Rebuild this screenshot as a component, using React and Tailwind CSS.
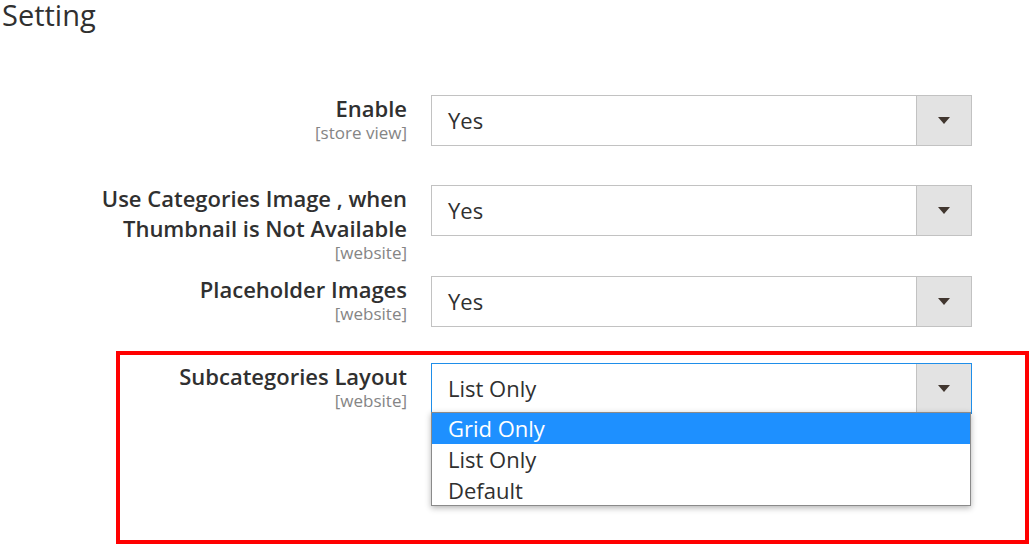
const font = { fontFamily: '"Open Sans", "Liberation Sans", sans-serif' };

function Arrow() {
  return (
    <svg width="12" height="7" viewBox="0 0 12 7">
      <path d="M0 0 H12 L6 7 Z" fill="#41362f" />
    </svg>
  );
}

function Select({ value, focused }) {
  return (
    <div
      className={
        "flex h-[51px] w-[541px] bg-white border " +
        (focused ? "border-[#1f8ee9]" : "border-[#c2c2c2]")
      }
    >
      <div className="flex flex-1 items-center pl-[16px] text-[22px] text-[#303030]">{value}</div>
      <div className="flex w-[55px] items-center justify-center bg-[#e3e3e3] border-l border-[#c2c2c2]">
        <Arrow />
      </div>
    </div>
  );
}

function Label({ lines, scope, width = "w-[407px]" }) {
  return (
    <div className={width + " -mt-[2px] text-right"}>
      {lines.map((l) => (
        <div key={l} className="text-[22px] leading-[30px] font-semibold text-[#303030]">
          {l}
        </div>
      ))}
      <div className="text-[17px] leading-[20px] text-[#858585]">{scope}</div>
    </div>
  );
}

export default function App() {
  return (
    <div className="w-[1032px] h-[546px] overflow-hidden bg-white" style={font}>
      <div className="h-[95px] pl-[2px] pt-[1px]">
        <h2 className="text-[29px] leading-[28px] font-medium text-[#303030]">Setting</h2>
      </div>

      <div className="flex h-[90px] items-start gap-[24px]">
        <Label lines={["Enable"]} scope="[store view]" />
        <Select value="Yes" />
      </div>

      <div className="flex h-[91px] items-start gap-[24px]">
        <Label lines={["Use Categories Image , when", "Thumbnail is Not Available"]} scope="[website]" />
        <Select value="Yes" />
      </div>

      <div className="flex h-[75px] items-start gap-[24px]">
        <Label lines={["Placeholder Images"]} scope="[website]" />
        <Select value="Yes" />
      </div>

      {/* highlighted row */}
      <div className="ml-[116px] w-[913px] h-[193px] border-[4px] border-[#ff0000] pt-[8px]">
        <div className="flex items-start gap-[24px]">
          <Label width="w-[287px]" lines={["Subcategories Layout"]} scope="[website]" />
          <div className="relative">
            <Select value="List Only" focused />
            <div className="absolute left-0 top-[49px] w-[540px] border border-[#8a8a8a] bg-white shadow-[0_2px_6px_rgba(0,0,0,0.3)] text-[22px] text-[#303030]">
              <div className="h-[31px] leading-[31px] pl-[16px] bg-[#1e90ff] text-white">Grid Only</div>
              <div className="h-[31px] leading-[31px] pl-[16px]">List Only</div>
              <div className="h-[30px] leading-[30px] pl-[16px]">Default</div>
            </div>
          </div>
        </div>
      </div>
    </div>
  );
}
